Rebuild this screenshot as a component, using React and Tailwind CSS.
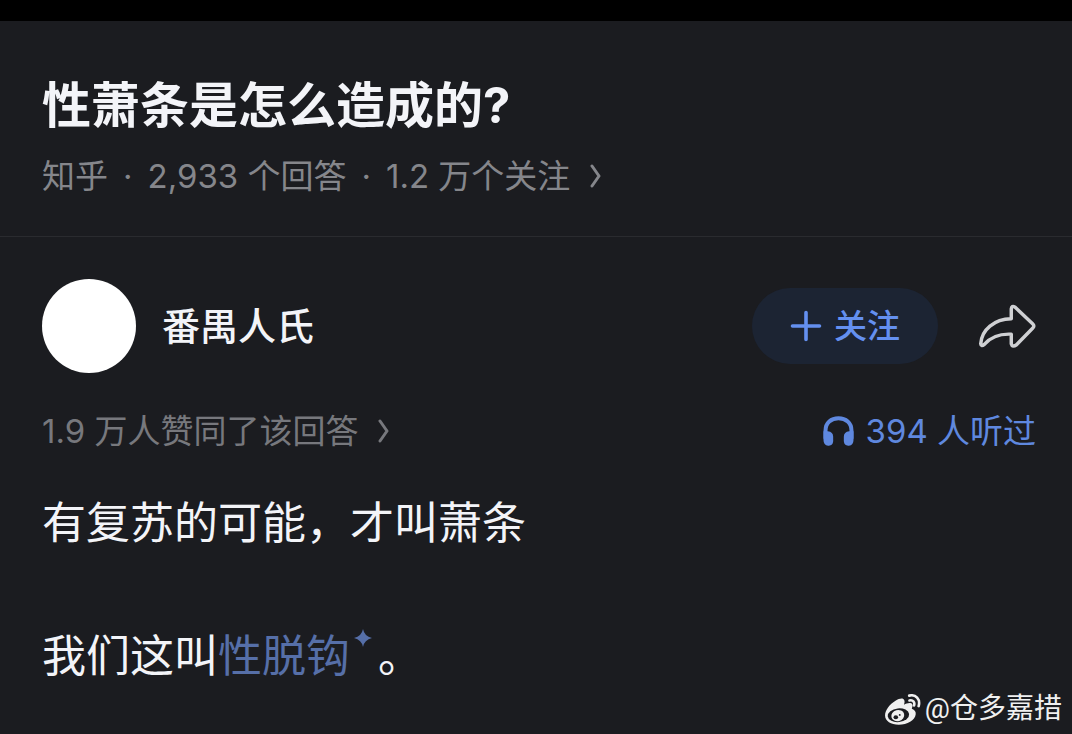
function Chevron() {
  return (
    <svg className="h-6 w-3 shrink-0" viewBox="0 0 12 24" fill="none" stroke="currentColor" strokeWidth="3" strokeLinecap="round" strokeLinejoin="round" aria-hidden="true">
      <path d="M2 2 L9 12 L2 22" />
    </svg>
  );
}

function PlusIcon() {
  return (
    <svg className="h-8 w-8" viewBox="0 0 32 32" fill="none" stroke="currentColor" strokeWidth="3.6" strokeLinecap="round" aria-hidden="true">
      <path d="M16 2.5 V29.5 M2.5 16 H29.5" />
    </svg>
  );
}

function ShareIcon() {
  return (
    <svg className="h-11 w-[58px]" viewBox="714 98 174 134" fill="none" stroke="currentColor" strokeWidth="10.5" strokeLinejoin="round" aria-hidden="true">
      <path d="M721 219 C724 176 762 144 814 143 V113 Q815 102 825 107 L879 158 Q886 165 879 172 L830 222 Q817 231 814 219 V190 C776 188 752 198 732 221 Q722 229 721 219 Z" />
    </svg>
  );
}

function HeadphonesIcon() {
  return (
    <svg className="h-[30px] w-[31px]" viewBox="64 44 92 90" aria-hidden="true">
      <path d="M71 112 V88 C71 64 88 51 110 51 C132 51 149 64 149 88 V112" fill="none" stroke="currentColor" strokeWidth="12" />
      <path d="M65 90 H78 Q94 92 94 106 V120 Q93 133 81 133 H79 Q65 132 65 116 Z" fill="currentColor" />
      <path d="M155 90 H142 Q126 92 126 106 V120 Q127 133 139 133 H141 Q155 132 155 116 Z" fill="currentColor" />
    </svg>
  );
}

function SparkIcon() {
  return (
    <svg className="absolute left-full top-0 ml-1 h-[18px] w-[18px]" viewBox="0 0 18 18" fill="currentColor" aria-hidden="true">
      <path d="M9 0 Q10.3 7.2 18 9 Q10.3 10.8 9 18 Q7.7 10.8 0 9 Q7.7 7.2 9 0 Z" />
    </svg>
  );
}

function WeiboIcon() {
  return (
    <svg className="h-[31px] w-[37px]" viewBox="10 12 111 95" aria-hidden="true">
      <path
        d="M12 78 C12 62 26 44 44 33 C56 25 68 23 71 31 C73 36 71 41 70 45 C78 40 91 37 95 43 C98 48 95 53 94 57 C103 60 107 66 106 74 C104 93 80 106 54 106 C30 106 12 95 12 78 Z"
        fill="currentColor"
      />
      <ellipse cx="53" cy="77" rx="33" ry="21" transform="rotate(-6 53 77)" fill="#1b1c20" />
      <ellipse cx="51" cy="78" rx="20" ry="17" transform="rotate(-15 51 78)" fill="currentColor" />
      <ellipse cx="45" cy="83" rx="7" ry="6" fill="#1b1c20" />
      <circle cx="57" cy="76" r="3" fill="#1b1c20" />
      <path d="M86 17 C106 12 121 28 115 49 M87 32 C97 29 104 37 101 47" fill="none" stroke="currentColor" strokeWidth="8" strokeLinecap="round" />
    </svg>
  );
}

export default function App() {
  return (
    <div className="flex min-h-screen flex-col bg-[#1b1c20] font-['Inter','Noto_Sans_CJK_SC',sans-serif] text-[#f3f4f8]">
      <div className="h-[21px] bg-black" />

      <header className="border-b border-[#2a2b2f] pr-9 pb-10 pl-[42px] pt-[55px]">
        <h1 className="text-[49px] leading-[60px] font-bold">性萧条是怎么造成的?</h1>
        <a href="#question" className="mt-5 flex items-center gap-5 text-[33px] leading-10 text-[#85868b]">
          <span className="flex gap-[15px]">
            <span>知乎</span>
            <span>·</span>
            <span>2,933 个回答</span>
            <span>·</span>
            <span>1.2 万个关注</span>
          </span>
          <Chevron />
        </a>
      </header>

      <main className="pr-9 pl-[42px] pt-[42px]">
        <div className="flex items-center">
          <div className="h-[94px] w-[94px] rounded-full bg-white" />
          <h2 className="ml-[26px] text-[38px] leading-[48px] font-medium">番禺人氏</h2>
          <button type="button" className="ml-auto flex h-[76px] items-center gap-3 rounded-full bg-[#1c2433] px-[38px] text-[33px] leading-10 font-medium text-[#6490f0]">
            <PlusIcon />
            关注
          </button>
          <button type="button" aria-label="分享" className="ml-10 text-[#cfd0d3]">
            <ShareIcon />
          </button>
        </div>

        <div className="mt-[38px] flex items-center justify-between text-[33px] leading-10">
          <a href="#votes" className="flex items-center gap-5 text-[#77787d]">
            <span>1.9 万人赞同了该回答</span>
            <Chevron />
          </a>
          <a href="#listen" className="flex items-center gap-3 text-[#5f88df]">
            <HeadphonesIcon />
            <span>394 人听过</span>
          </a>
        </div>

        <article className="mt-[39px] flex flex-col gap-[67px] text-[44px] leading-[66px]">
          <p>有复苏的可能，才叫萧条</p>
          <p>
            我们这叫
            <a href="#term" className="relative mr-7 text-[#566fa8]">
              性脱钩
              <SparkIcon />
            </a>
            。
          </p>
        </article>
      </main>

      <footer className="flex items-center justify-end gap-1 pr-[10px] font-['Roboto','Noto_Sans_CJK_SC',sans-serif] text-[28px] leading-10 text-[#f0f0f0]">
        <WeiboIcon />
        <span>@仓多嘉措</span>
      </footer>
    </div>
  );
}
